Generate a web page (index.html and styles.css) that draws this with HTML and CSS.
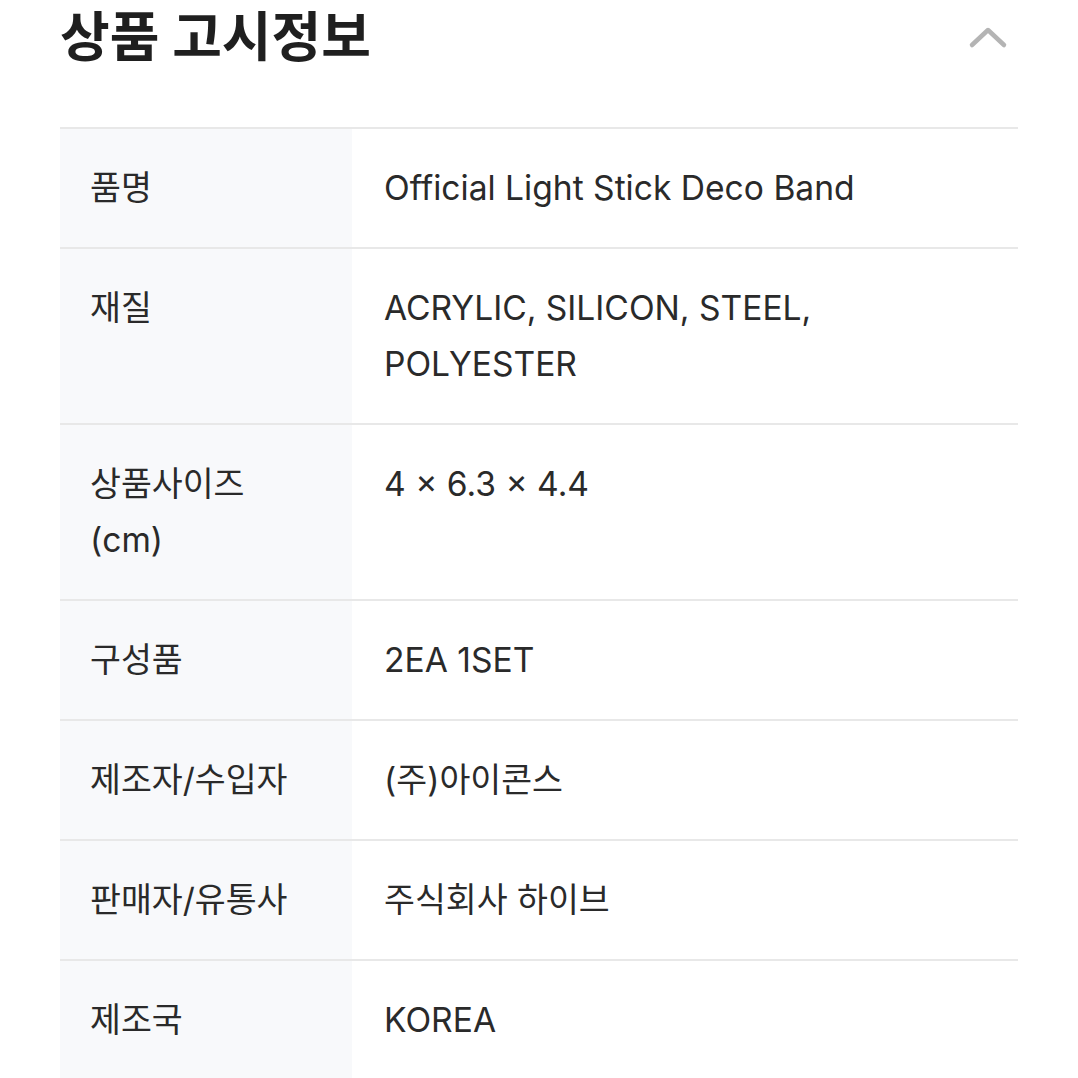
FILE: index.html
```html
<!DOCTYPE html>
<html lang="ko">
<head>
<meta charset="utf-8">
<link rel="stylesheet" href="styles.css">
</head>
<body>
<section class="notice">
  <header class="notice-head">
    <h2 class="notice-title">상품 고시정보</h2>
    <svg class="chevron" width="40" height="24" viewBox="0 0 40 24" aria-hidden="true">
      <path d="M4 20 L20 5 L36 20" fill="none" stroke="#b4b4b4" stroke-width="4.5" stroke-linecap="round" stroke-linejoin="round"/>
    </svg>
  </header>
  <div class="info-table">
    <div class="row"><div class="label">품명</div><div class="value">Official Light Stick Deco Band</div></div>
    <div class="row"><div class="label">재질</div><div class="value">ACRYLIC, SILICON, STEEL,<br>POLYESTER</div></div>
    <div class="row"><div class="label">상품사이즈<br>(cm)</div><div class="value">4 × 6.3 × 4.4</div></div>
    <div class="row"><div class="label">구성품</div><div class="value">2EA 1SET</div></div>
    <div class="row"><div class="label">제조자/수입자</div><div class="value">(주)아이콘스</div></div>
    <div class="row"><div class="label">판매자/유통사</div><div class="value">주식회사 하이브</div></div>
    <div class="row"><div class="label">제조국</div><div class="value">KOREA</div></div>
  </div>
</section>
</body>
</html>
```
FILE: styles.css
```css
html, body {
  margin: 0;
  padding: 0;
  background: #ffffff;
}
body {
  font-family: Inter, "Noto Sans CJK KR", sans-serif;
  color: #222222;
}
.notice {
  padding: 0 60px;
}
.notice-head {
  display: flex;
  align-items: center;
  justify-content: space-between;
  height: 76px;
  margin-bottom: 51px;
}
.notice-title {
  margin: 0;
  font-family: Inter, "Noto Sans CJK KR", sans-serif;
  font-size: 54px;
  font-weight: 700;
  color: #1f1f1f;
  line-height: 1;
}
.chevron {
  margin-right: 10px;
  margin-top: -2px;
}
.info-table {
  border-top: 2px solid #e8e8e8;
}
.row {
  display: grid;
  grid-template-columns: 292px 1fr;
  border-bottom: 2px solid #e8e8e8;
}
.label {
  background: #f8f9fb;
  padding: 31px 30px;
  font-size: 33.6px;
  line-height: 56px;
  color: #2a2a2a;
}
.value {
  padding: 31px 32px;
  font-size: 33.6px;
  line-height: 56px;
  color: #2a2a2a;
}
```
